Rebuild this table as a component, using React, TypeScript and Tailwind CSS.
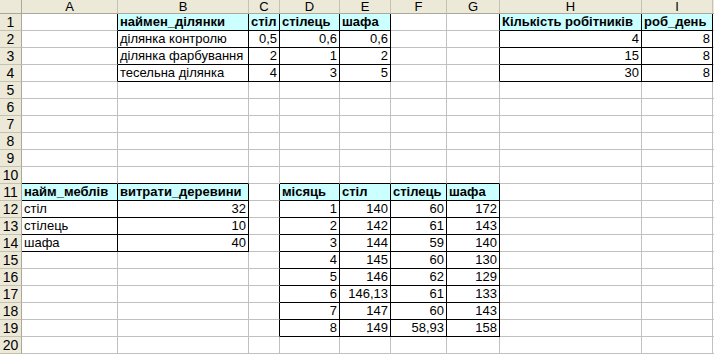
import React from "react";

// Spreadsheet sheet: column headers A..I, rows 1..20, four bordered tables.
const COLS = ["A", "B", "C", "D", "E", "F", "G", "H", "I", ""];
const ROWS = 20;

type Cell = { v: string; head?: boolean };
type Range = { c1: number; r1: number; c2: number; r2: number };

const cells: Record<string, Cell> = {};
const ranges: Range[] = [];

function table(col: number, row: number, head: string[], body: string[][]) {
  head.forEach((v, i) => (cells[`${col + i},${row}`] = { v, head: true }));
  body.forEach((line, j) =>
    line.forEach((v, i) => (cells[`${col + i},${row + 1 + j}`] = { v }))
  );
  ranges.push({ c1: col, r1: row, c2: col + head.length - 1, r2: row + body.length });
}

table(2, 1, ["наймен_ділянки", "стіл", "стілець", "шафа"], [
  ["ділянка контролю", "0,5", "0,6", "0,6"],
  ["ділянка фарбування", "2", "1", "2"],
  ["тесельна ділянка", "4", "3", "5"],
]);
table(8, 1, ["Кількість робітників", "роб_день"], [
  ["4", "8"],
  ["15", "8"],
  ["30", "8"],
]);
table(1, 11, ["найм_меблів", "витрати_деревини"], [
  ["стіл", "32"],
  ["стілець", "10"],
  ["шафа", "40"],
]);
table(4, 11, ["місяць", "стіл", "стілець", "шафа"], [
  ["1", "140", "60", "172"],
  ["2", "142", "61", "143"],
  ["3", "144", "59", "140"],
  ["4", "145", "60", "130"],
  ["5", "146", "62", "129"],
  ["6", "146,13", "61", "133"],
  ["7", "147", "60", "143"],
  ["8", "149", "58,93", "158"],
]);

const inTable = (c: number, r: number) =>
  ranges.some((t) => c >= t.c1 && c <= t.c2 && r >= t.r1 && r <= t.r2);

const isNum = (v: string) => /^[\d,]+$/.test(v);

function DataCell({ c, r }: { c: number; r: number }) {
  const cell = cells[`${c},${r}`];
  const right = inTable(c, r) || inTable(c + 1, r) ? "border-r-black" : "border-r-[#c0c0c0]";
  const bottom = inTable(c, r) || inTable(c, r + 1) ? "border-b-black" : "border-b-[#c0c0c0]";
  const num = cell ? isNum(cell.v) : false;
  return (
    <div
      className={`h-[17px] overflow-hidden whitespace-nowrap border-r border-b px-[2px] leading-[16px] ${right} ${bottom} ${
        cell?.head ? "bg-[#ccffff] font-bold" : "bg-white"
      } ${num ? "text-right" : "text-left"}`}
    >
      {cell?.v}
    </div>
  );
}

export default function App() {
  return (
    <div
      className="h-[354px] w-[714px] overflow-hidden bg-white text-[13px] text-black"
      style={{ fontFamily: '"Liberation Sans", Arial, sans-serif' }}
    >
      <div className="grid w-[786px] grid-cols-[22px_96px_131px_31px_60px_51px_56px_53px_142px_71px_73px]">
        {/* corner + column letters */}
        <div className="h-[14px] border-r border-b border-r-[#aca899] border-b-[#aca899] bg-[#ece9d8]" />
        {COLS.map((l, i) => (
          <div
            key={i}
            className="flex h-[14px] items-center justify-center border-r border-b border-r-[#c5c2b2] border-b-[#aca899] bg-[#ece9d8] leading-[13px]"
          >
            {l}
          </div>
        ))}

        {Array.from({ length: ROWS }, (_, i) => i + 1).map((r) => (
          <React.Fragment key={r}>
            <div className="h-[17px] border-r border-b border-r-[#aca899] border-b-[#c5c2b2] bg-[#ece9d8] text-center text-[14px] leading-[16px]">
              {r}
            </div>
            {COLS.map((_, ci) => (
              <DataCell key={ci} c={ci + 1} r={r} />
            ))}
          </React.Fragment>
        ))}
      </div>
    </div>
  );
}
